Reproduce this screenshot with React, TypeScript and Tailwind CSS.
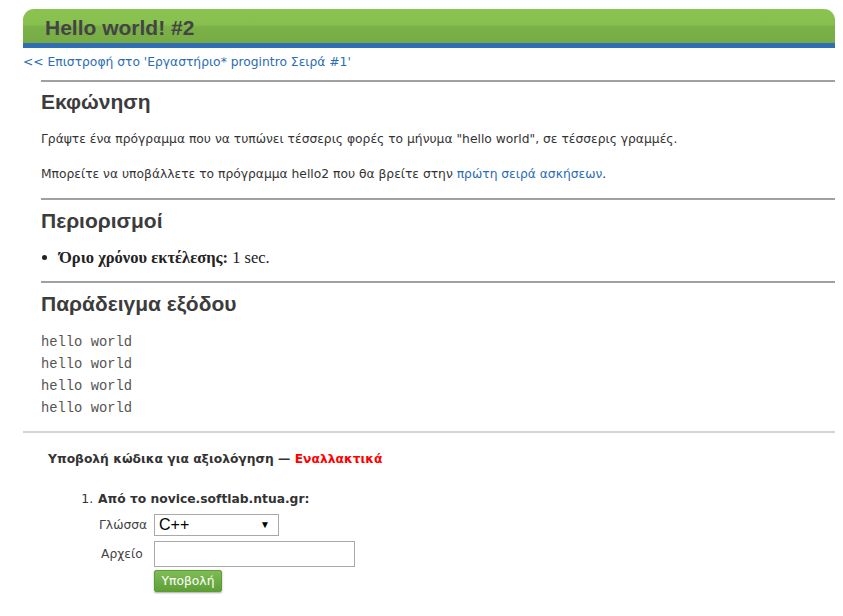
import React from "react";

const body = "font-['Tahoma','DejaVu_Sans',sans-serif]";
const heading = "font-['Liberation_Sans',Arial,sans-serif] font-bold text-[#3c3c3c] text-[21px] leading-[24px]";

export default function App() {
  const lines = ["hello world", "hello world", "hello world", "hello world"];
  return (
    <div className="min-h-[616px] bg-white pt-[9px] text-[#333]">
      <div className="ml-[23px] w-[812px]">
        {/* title bar */}
        <div className="h-[39px] rounded-t-[11px] border-b-[5px] border-[#2f6eb5] bg-[linear-gradient(to_bottom,#8bc351_0%,#88c04f_45%,#7bb149_52%,#77ac45_100%)] pl-[22px]">
          <h1 className="pt-[2px] font-['Liberation_Sans',Arial,sans-serif] text-[21px] font-bold leading-[34px] text-[#444]">
            Hello world! #2
          </h1>
        </div>

        <a className={`${body} mt-[6px] block text-[12.3px] leading-[16px] text-[#2a6db4]`}>
          &lt;&lt; Επιστροφή στο 'Εργαστήριο* progintro Σειρά #1'
        </a>

        <div className="ml-[18px] mt-[10px]">
          <div className="border-t-2 border-[#a0a0a0] pt-[8px]">
            <h2 className={heading}>Εκφώνηση</h2>
            <p className={`${body} mt-[17px] text-[12.3px] leading-[16px] text-[#333]`}>
              Γράψτε ένα πρόγραμμα που να τυπώνει τέσσερις φορές το μήνυμα "hello world", σε τέσσερις γραμμές.
            </p>
            <p className={`${body} mt-[19px] text-[12.3px] leading-[16px] text-[#333]`}>
              Μπορείτε να υποβάλλετε το πρόγραμμα hello2 που θα βρείτε στην{" "}
              <a className="text-[#2a6db4]">πρώτη σειρά ασκήσεων</a>.
            </p>
          </div>

          <div className="mt-[16px] border-t-2 border-[#a0a0a0] pt-[9px]">
            <h2 className={heading}>Περιορισμοί</h2>
            <ul className="mt-[16px] list-disc pl-[18px] font-['Liberation_Serif','Times_New_Roman',serif] text-[16.5px] leading-[18px] text-[#222]">
              <li>
                <b>Όριο χρόνου εκτέλεσης:</b> 1 sec.
              </li>
            </ul>
          </div>

          <div className="mt-[14px] border-t-2 border-[#a0a0a0] pt-[9px]">
            <h2 className={heading}>Παράδειγμα εξόδου</h2>
            <pre className="mt-[16px] font-['Liberation_Mono','Courier_New',monospace] text-[13.8px] leading-[22px] text-[#555]">
              {lines.join("\n")}
            </pre>
          </div>
        </div>

        <div className="mt-[11px] border-t-2 border-[#d4d4d4] pt-[18px]">
          <div className={`${body} pl-[25px] text-[12.3px] font-bold leading-[16px] text-[#333]`}>
            Υποβολή κώδικα για αξιολόγηση — <span className="text-[#ff0000]">Εναλλακτικά</span>
          </div>

          <ol className={`${body} mt-[24px] list-decimal pl-[74px] text-[12.3px] leading-[16px]`}>
            <li className="pl-[1px]">
              <b className="text-[#333]">Από το novice.softlab.ntua.gr:</b>
              <div className="mt-[7px] grid grid-cols-[56px_auto] items-center gap-y-[5px] text-[#444]">
                <span className="pl-[1px]">Γλώσσα</span>
                <div className="flex h-[22px] w-[125px] items-center justify-between border border-[#a9a9a9] bg-white pl-[4px] pr-[8px] font-['Liberation_Sans',Arial,sans-serif] text-[16px] text-black">
                  <span>C++</span>
                  <span className="text-[10px]">▼</span>
                </div>
                <span className="pl-[3px]">Αρχείο</span>
                <div className="h-[26px] w-[201px] border border-[#a9a9a9] bg-white" />
                <span />
                <button className="mt-[-2px] h-[22px] w-[68px] rounded-[2px] border border-[#5e9c36] bg-[linear-gradient(to_bottom,#7fbc55,#5f9f38)] text-[12.3px] leading-[18px] text-white shadow-[0_1px_2px_rgba(0,0,0,0.35)]">
                  Υποβολή
                </button>
              </div>
            </li>
          </ol>
        </div>
      </div>
    </div>
  );
}
